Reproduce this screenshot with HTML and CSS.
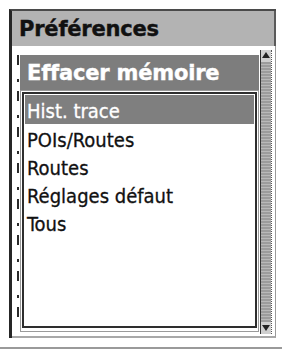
FILE: index.html
```html
<!DOCTYPE html>
<html lang="fr">
<head>
<meta charset="utf-8">
<title>Préférences</title>
<link rel="stylesheet" href="styles.css">
</head>
<body>
<div class="screen">
  <div class="frame">
    <div class="titlebar">Préférences</div>
    <div class="content">
      <div class="dashcol"><div class="dashes"></div></div>
      <div class="popup">
        <div class="popup-head">Effacer mémoire</div>
        <div class="list">
          <div class="list-inner">
            <div class="row selected">Hist. trace</div>
            <div class="row">POIs/Routes</div>
            <div class="row">Routes</div>
            <div class="row">Réglages défaut</div>
            <div class="row">Tous</div>
          </div>
        </div>
      </div>
      <div class="scroll">
        <div class="arrow up"></div>
        <div class="track"></div>
        <div class="arrow down"></div>
      </div>
    </div>
  </div>
  <div class="baseline"></div>
</div>
</body>
</html>
```
FILE: styles.css
```css
html, body {
  margin: 0;
  padding: 0;
  background: #ffffff;
}
body {
  width: 282px;
  height: 351px;
  overflow: hidden;
  font-family: "DejaVu Sans", "Liberation Sans", sans-serif;
}
.screen {
  padding: 9px 0 0 9px;
}
.frame {
  width: 264px;
  border-left: 3px solid #262626;
  border-top: 2px solid #4a4a4a;
}
.titlebar {
  height: 35px;
  background: #b3b3b3;
  border-right: 2px solid #5a5a5a;
  font-weight: bold;
  font-size: 21px;
  line-height: 37px;
  padding-left: 7px;
  color: #111;
  letter-spacing: -0.2px;
  -webkit-text-stroke: 0.4px #111;
}
.content {
  display: flex;
  height: 290px;
  border-right: 1px solid #9a9a9a;
  border-bottom: 2px solid #a8a8a8;
}
.dashcol {
  width: 8px;
  padding-top: 9px;
}
.dashes {
  margin-left: 5px;
  width: 2px;
  height: 268px;
  background: repeating-linear-gradient(to bottom, #2a2a2a 0 10px, transparent 10px 24px, #2a2a2a 24px 27px, transparent 27px 36px);
}
.popup {
  width: 239px;
  margin-top: 9px;
  display: flex;
  flex-direction: column;
}
.popup-head {
  height: 35px;
  background: #7d7d7d;
  color: #ffffff;
  font-weight: bold;
  font-size: 21px;
  line-height: 37px;
  padding-left: 7px;
  letter-spacing: -0.2px;
  -webkit-text-stroke: 0.4px #fff;
}
.list {
  height: 238px;
  border: 1px solid #9a9a9a;
  padding: 1px;
  background: #fff;
}
.list-inner {
  height: 230px;
  border: 2px solid #2e2e2e;
  padding: 1px;
}
.row {
  height: 28px;
  padding: 5px 0 0 2px;
  box-sizing: border-box;
  line-height: 23px;
  font-family: "DejaVu Sans Condensed", "DejaVu Sans", sans-serif;
  font-stretch: condensed;
  font-size: 20px;
  color: #111;
  -webkit-text-stroke: 0.3px #111;
}
.row.selected {
  background: #7f7f7f;
  color: #ffffff;
  height: 29px;
  -webkit-text-stroke: 0.3px #fff;
}
.scroll {
  width: 12px;
  margin-left: 1px;
  margin-top: 4px;
  height: 284px;
  display: flex;
  flex-direction: column;
  border-left: 1px solid #333;
  border-right: 1px dotted #555;
  box-sizing: border-box;
}
.arrow {
  height: 12px;
  position: relative;
  background: #cfcfcf;
}
.arrow.up::after {
  content: "";
  position: absolute;
  left: 1px;
  top: 2px;
  border-left: 4px solid transparent;
  border-right: 4px solid transparent;
  border-bottom: 6px solid #222;
}
.arrow.down::after {
  content: "";
  position: absolute;
  left: 1px;
  top: 3px;
  border-left: 4px solid transparent;
  border-right: 4px solid transparent;
  border-top: 6px solid #222;
}
.track {
  flex: 1;
  background: repeating-linear-gradient(to bottom, #9c9c9c 0 2px, #b8b8b8 2px 3px);
}
.baseline {
  margin-top: 9px;
  width: 282px;
  margin-left: -9px;
  height: 2px;
  background: #9a9a9a;
}
```
